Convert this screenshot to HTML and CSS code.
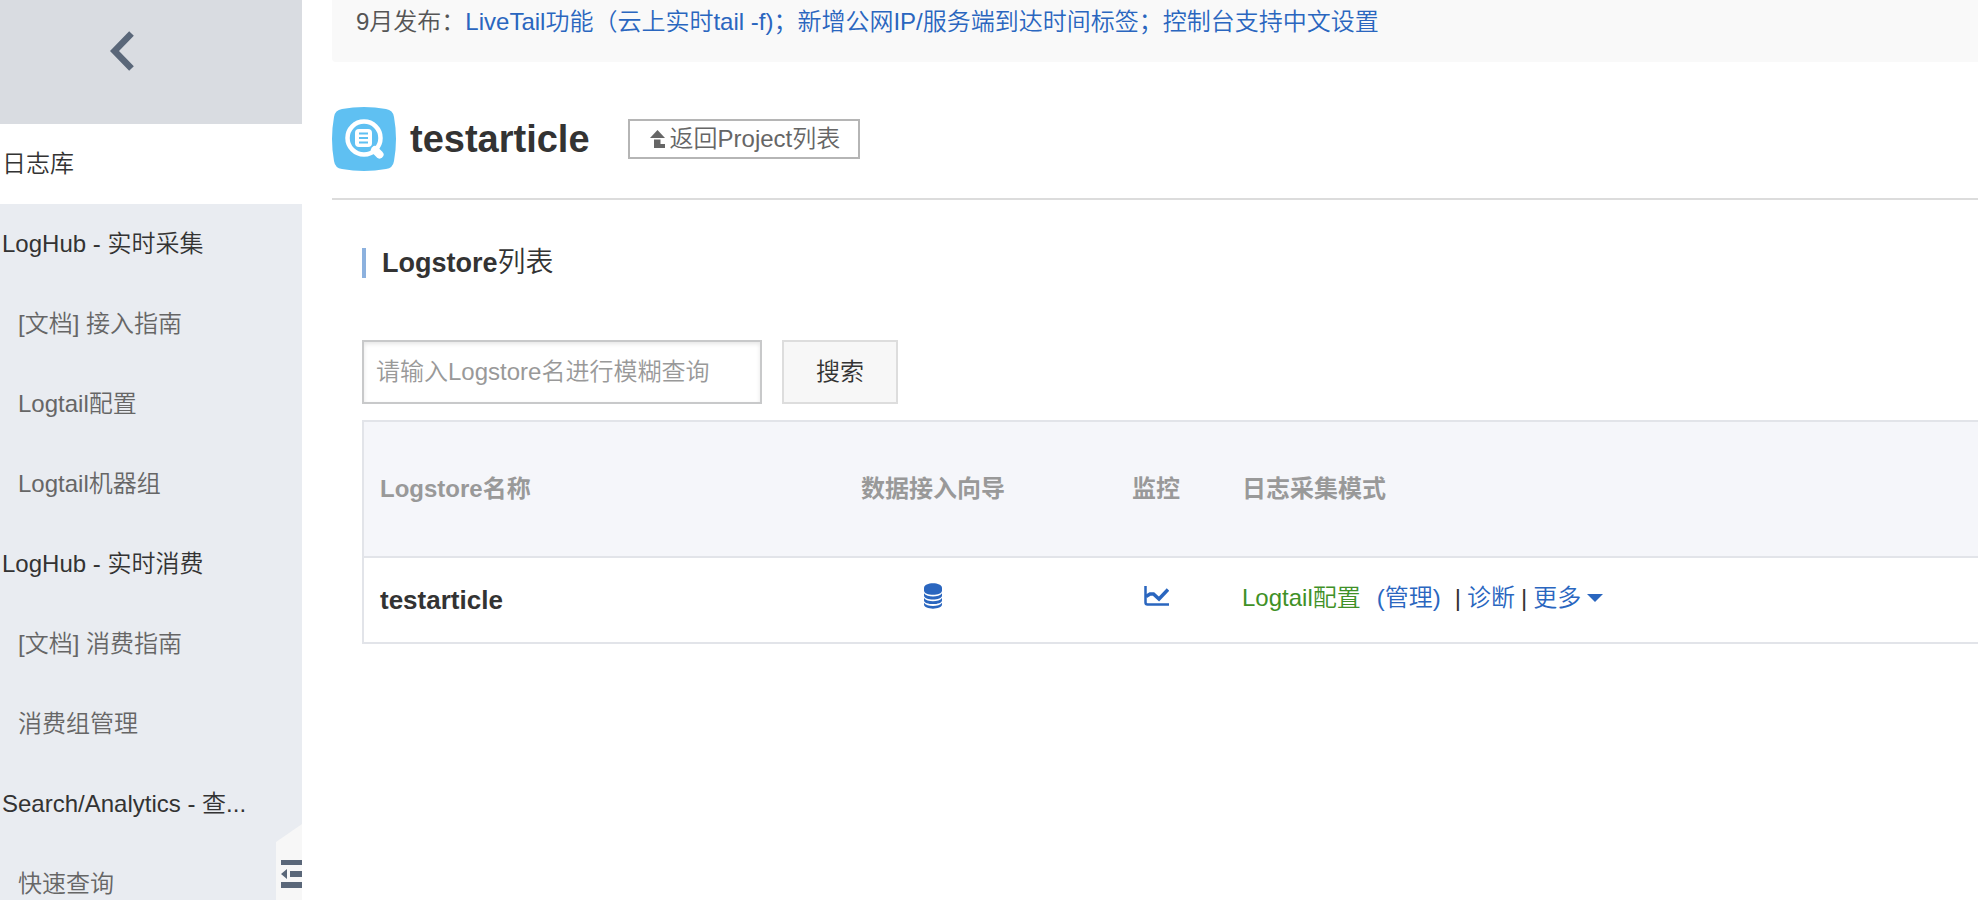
FILE: index.html
```html
<!DOCTYPE html>
<html lang="zh-CN">
<head>
    <meta charset="UTF-8">
    <meta name="viewport" content="width=device-width, initial-scale=1.0">
    <title>testarticle</title>
    <link rel="stylesheet" href="styles.css">
</head>
<body>

<div class="app">
    <nav class="sidebar">
        <button class="sidebar-back">
            <svg width="24" height="40" viewBox="0 0 24 40">
                <path d="M21.5 2.5 L4.5 20 L21.5 37.5" fill="none" stroke="#5a6779" stroke-width="6.5"/>
            </svg>
        </button>
        <a href="#" class="nav-title active">日志库</a>
        <a href="#" class="nav-title">LogHub - 实时采集</a>
        <a href="#" class="nav-item">[文档] 接入指南</a>
        <a href="#" class="nav-item">Logtail配置</a>
        <a href="#" class="nav-item">Logtail机器组</a>
        <a href="#" class="nav-title">LogHub - 实时消费</a>
        <a href="#" class="nav-item">[文档] 消费指南</a>
        <a href="#" class="nav-item">消费组管理</a>
        <a href="#" class="nav-title">Search/Analytics - 查...</a>
        <a href="#" class="nav-item">快速查询</a>

        <button class="sidebar-toggle">
            <svg width="26" height="76" viewBox="0 0 26 76">
                <path d="M0 18 L26 0 V76 H0 Z" fill="#f7f7f7"/>
                <path d="M5 36 H26 V41 H5 Z M14 47 H26 V53 H14 Z M5 58 H26 V64 H5 Z M5 50 L11 45 V55 Z" fill="#5a6779"/>
            </svg>
        </button>
    </nav>

    <main class="main">
        <div class="notice">
            9月发布：<a href="#">LiveTail功能（云上实时tail -f)；新增公网IP/服务端到达时间标签；控制台支持中文设置</a>
        </div>

        <header class="page-header">
            <svg class="logo" width="64" height="64" viewBox="0 0 64 64">
                <path d="M10 2 Q32 -2 54 2 Q61 3 62 10 Q66 32 62 54 Q61 61 54 62 Q32 66 10 62 Q3 61 2 54 Q-2 32 2 10 Q3 3 10 2 Z" fill="#5fc0f2"/>
                <circle cx="32" cy="31" r="16.5" fill="none" stroke="#fff" stroke-width="4.5"/>
                <path d="M43 43 L47.5 47.5" stroke="#fff" stroke-width="8" stroke-linecap="round"/>
                <rect x="23" y="22" width="17" height="18" rx="4" fill="#fff"/>
                <path d="M27 26.5 H36 M27 31 H36 M27 35.5 H36" stroke="#5fc0f2" stroke-width="2"/>
            </svg>
            <h1>testarticle</h1>
            <button class="return-button">
                <svg width="16" height="18" viewBox="0 0 16 18">
                    <path d="M7.5 0 L15 8 H0 Z M4 9.5 H10.5 V14 H15 V18 H4 Z" fill="#666"/>
                </svg>
                返回Project列表
            </button>
        </header>

        <section class="content">
            <h2><b>Logstore</b>列表</h2>

            <form class="search-bar">
                <input type="text" aria-label="Logstore" placeholder="请输入Logstore名进行模糊查询">
                <button type="button">搜索</button>
            </form>

            <table class="logstore-table">
                <thead>
                    <tr>
                        <th class="col-name">Logstore名称</th>
                        <th class="col-guide">数据接入向导</th>
                        <th class="col-monitor">监控</th>
                        <th>日志采集模式</th>
                    </tr>
                </thead>
                <tbody>
                    <tr>
                        <td class="col-name">testarticle</td>
                        <td class="col-guide">
                            <a href="#" class="icon-link">
                                <svg width="18" height="26" viewBox="0 0 18 26">
                                    <g fill="#2a66bf">
                                        <path d="M0 5 C0 -1.3 18 -1.3 18 5 V7.5 C18 13.3 0 13.3 0 7.5 Z"/>
                                        <path d="M0 10.2 C3 14.6 15 14.6 18 10.2 V12.5 C18 17.8 0 17.8 0 12.5 Z"/>
                                        <path d="M0 15 C3 19.4 15 19.4 18 15 V17.2 C18 22.4 0 22.4 0 17.2 Z"/>
                                        <path d="M0 19.8 C3 24.2 15 24.2 18 19.8 V21.5 C18 27 0 27 0 21.5 Z"/>
                                    </g>
                                </svg>
                            </a>
                        </td>
                        <td class="col-monitor">
                            <a href="#" class="icon-link">
                                <svg width="25" height="20" viewBox="0 0 25 20">
                                    <path d="M1.5 0 V16.5 Q1.5 18.5 3.5 18.5 H25" fill="none" stroke="#2a66bf" stroke-width="2.5"/>
                                    <path d="M2 10.5 L6 8 L9.5 8 L15 13 L24 3.5" fill="none" stroke="#2a66bf" stroke-width="3.5"/>
                                </svg>
                            </a>
                        </td>
                        <td>
                            <div class="actions">
                                <a href="#" class="config-link">Logtail配置</a>
                                <a href="#" class="manage-link">(管理)</a>
                                <span>|</span>
                                <a href="#">诊断</a>
                                <span>|</span>
                                <button class="more-button">
                                    更多
                                    <svg width="16" height="8" viewBox="0 0 16 8"><path d="M0 0 H16 L8 8 Z" fill="#2a66bf"/></svg>
                                </button>
                            </div>
                        </td>
                    </tr>
                </tbody>
            </table>
        </section>
    </main>
</div>

</body>
</html>
```
FILE: styles.css
```css
* {
    box-sizing: border-box;
}
body {
    margin: 0;
    font-family: "Liberation Sans", "Noto Sans CJK SC", sans-serif;
    font-size: 24px;
    font-weight: 350;
    line-height: 36px;
    color: #333;
    background-color: #fff;
}
a {
    color: #2a66bf;
    text-decoration: none;
}
a:hover {
    text-decoration: underline;
}
button, input {
    font: inherit;
    color: inherit;
    cursor: pointer;
}
svg {
    display: block;
}
.app {
    display: flex;
    height: 100vh;
    overflow: hidden;
}

/* sidebar */
.sidebar {
    position: relative;
    flex: 0 0 302px;
    overflow: hidden;
    background-color: #e9ecf1;
}
.sidebar-back {
    display: block;
    width: 100%;
    height: 124px;
    padding: 0 0 22px 110px;
    border: none;
    background-color: #d9dce1;
}
.nav-title, .nav-item {
    display: block;
    padding: 22px 2px;
    color: #333;
    white-space: nowrap;
}
.nav-item {
    padding-left: 18px;
    color: #666;
}
.nav-title.active {
    background-color: #fff;
}
.sidebar-toggle {
    position: absolute;
    right: 0;
    bottom: 0;
    padding: 0;
    border: none;
    background: none;
}

/* main */
.main {
    flex: 1;
    min-width: 0;
    padding-left: 30px;
}
.notice {
    padding: 4px 0 22px 24px;
    border-bottom-left-radius: 4px;
    background-color: #f9f9f9;
    color: #555;
}
.page-header {
    display: flex;
    align-items: center;
    height: 138px;
    padding-top: 32px;
    padding-bottom: 14px;
    border-bottom: 2px solid #dcdcdc;
}
h1 {
    margin: 0 38px 0 14px;
    font-size: 38px;
    line-height: 48px;
    font-weight: bold;
}
.return-button {
    display: flex;
    align-items: center;
    gap: 4px;
    height: 40px;
    padding: 0 18px 0 20px;
    border: 2px solid #b5b5b5;
    background-color: #fff;
    color: #666;
}
.content {
    padding: 48px 0 0 30px;
}
h2 {
    margin: 0;
    padding-left: 16px;
    border-left: 4px solid #8cb1de;
    font-size: 28px;
    line-height: 30px;
    font-weight: 350;
}
h2 b {
    font-size: 27px;
    font-weight: 700;
}
.search-bar {
    display: flex;
    gap: 20px;
    margin: 62px 0 16px;
}
.search-bar input {
    width: 400px;
    height: 64px;
    padding: 0 12px;
    border: 2px solid #c8c9ca;
    box-shadow: inset 0 2px 4px rgba(0, 0, 0, 0.1);
    cursor: text;
}
.search-bar input::placeholder {
    color: #999;
    opacity: 1;
}
.search-bar button {
    width: 116px;
    height: 64px;
    border: 2px solid #ddd;
    background-color: #f7f7f7;
}

/* table */
.logstore-table {
    width: 100%;
    table-layout: fixed;
    border-collapse: separate;
    border-spacing: 0;
    border: 2px solid #e2e4e9;
    border-right: none;
}
.logstore-table th {
    height: 136px;
    padding: 0 16px;
    border-bottom: 2px solid #e2e4e9;
    background-color: #f5f6fa;
    color: #999;
    font-weight: bold;
    text-align: left;
}
.logstore-table td {
    height: 84px;
    padding: 0 16px 4px;
}
.logstore-table .col-name {
    width: 416px;
}
.logstore-table .col-guide {
    width: 306px;
    text-align: center;
}
.logstore-table .col-monitor {
    width: 140px;
    text-align: center;
}
.logstore-table td.col-name {
    padding-bottom: 0;
    font-size: 26px;
    font-weight: bold;
}
.logstore-table td.col-guide, .logstore-table td.col-monitor {
    padding-bottom: 12px;
}
.icon-link {
    display: inline-block;
    vertical-align: middle;
}
.actions {
    display: flex;
    align-items: center;
    gap: 6px;
    white-space: nowrap;
}
.config-link {
    color: #3f9127;
}
.manage-link {
    margin: 0 8px 0 10px;
}
.more-button {
    display: flex;
    align-items: center;
    gap: 6px;
    padding: 0;
    border: none;
    background: none;
    color: #2a66bf;
}
```
